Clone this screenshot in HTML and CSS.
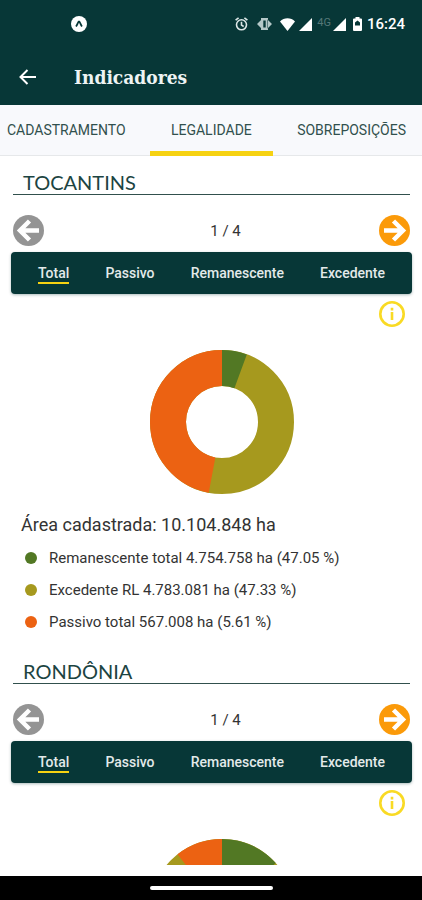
FILE: index.html
```html
<!DOCTYPE html>
<html lang="pt-BR">
<head>
<meta charset="utf-8">
<meta name="viewport" content="width=device-width, initial-scale=1">
<title>Indicadores</title>
<link rel="stylesheet" href="styles.css">
</head>
<body>
<svg class="symbols" aria-hidden="true">
  <symbol id="arrow-left" viewBox="0 0 31 31">
    <circle cx="15.500" cy="15.500" r="15.500" fill="currentColor"/>
    <path d="M16.500 6 7 15.500l9.500 9.500M8 15.500h18" fill="none" stroke="#fff" stroke-width="4.500"/>
  </symbol>
  <symbol id="arrow-right" viewBox="0 0 31 31">
    <circle cx="15.500" cy="15.500" r="15.500" fill="currentColor"/>
    <path d="m14.500 6 9.500 9.500-9.500 9.500M23 15.500H5" fill="none" stroke="#fff" stroke-width="4.500"/>
  </symbol>
  <symbol id="info" viewBox="0 0 26 26">
    <circle cx="13" cy="13" r="11.700" fill="none" stroke="currentColor" stroke-width="2.600"/>
    <path d="M13 11v8M13 6.800v2.600" stroke="currentColor" stroke-width="2.600"/>
  </symbol>
  <symbol id="signal" viewBox="0 0 13 13"><path d="M13 0v13H0z" fill="#fff"/></symbol>
</svg>
<div class="app">
  <header class="top">
    <div class="status">
      <svg class="notice" width="16" height="16" viewBox="0 0 16 16"><circle cx="8" cy="8" r="8" fill="#fff"/><path d="M5 10.500C6.300 9 7 5.500 8 5.500s1.700 3.500 3 5" fill="none" stroke="#073737" stroke-width="1.800"/></svg>
      <svg width="13" height="14" viewBox="0 0 13 14"><g fill="none" stroke="#dce6e6" stroke-width="1.600"><circle cx="6.500" cy="7.800" r="5"/><path d="M.6 3.200 3.600.8M12.400 3.200 9.400.8M6.500 4.800v3.300l2.200 1.400"/></g></svg>
      <svg class="vibrate" width="15" height="12" viewBox="0 0 15 12"><path d="M4 0h7v12H4zM0 6l4.500-4.500v9zM15 6l-4.500-4.500v9z" fill="#b4c8c8"/><path d="M7.500 2.500v7" stroke="#073737" stroke-width="2.400"/></svg>
      <svg class="wifi" width="15" height="13" viewBox="0 0 15 13"><path d="M0 3.500C4-.7 11-.7 15 3.500L7.500 13z" fill="#fff"/></svg>
      <svg class="bars" width="13" height="13"><use href="#signal"/></svg>
      <span class="network">4G</span>
      <svg width="13" height="13"><use href="#signal"/></svg>
      <svg class="battery" width="9" height="14" viewBox="0 0 9 14"><path d="M2.500 0h4v1.500H8q1 0 1 1V13q0 1-1 1H1q-1 0-1-1V2.500q0-1 1-1h1.500z" fill="#fff"/><path d="M2 8.500V5.500L4.500 3.500 7 5.500v3z" fill="#073737"/></svg>
      <span class="time">16:24</span>
    </div>
    <div class="bar">
      <button class="back" aria-label="Voltar"><svg width="17" height="16" viewBox="0 0 17 16"><path d="M8.500 1 1.500 8l7 7M2 8h15" fill="none" stroke="#fff" stroke-width="2"/></svg></button>
      <h1>Indicadores</h1>
    </div>
  </header>
  <nav class="tabs">
    <a href="#cadastramento">CADASTRAMENTO</a>
    <a href="#legalidade" class="current" aria-current="page">LEGALIDADE</a>
    <a href="#sobreposicoes">SOBREPOSIÇÕES</a>
  </nav>
  <main>
    <section>
      <h2>TOCANTINS</h2>
      <div class="pager">
        <button class="prev" aria-label="Anterior"><svg><use href="#arrow-left"/></svg></button>
        <span class="page">1 / 4</span>
        <button class="next" aria-label="Próximo"><svg><use href="#arrow-right"/></svg></button>
      </div>
      <div class="filters">
        <button class="selected">Total</button>
        <button>Passivo</button>
        <button>Remanescente</button>
        <button>Excedente</button>
      </div>
      <button class="info" aria-label="Informações"><svg><use href="#info"/></svg></button>
      <div class="chart">
        <svg class="donut" viewBox="0 0 144 144">
          <circle class="excess" cx="72" cy="72" r="54"/>
          <circle class="remaining" cx="72" cy="72" r="54" pathLength="100" stroke-dasharray="5.61 94.39"/>
          <circle class="liability" cx="72" cy="72" r="54" pathLength="100" stroke-dasharray="47.05 52.95" stroke-dashoffset="-52.95"/>
        </svg>
      </div>
      <p class="area">Área cadastrada: 10.104.848 ha</p>
      <ul class="legend">
        <li class="remaining">Remanescente total 4.754.758 ha (47.05 %)</li>
        <li class="excess">Excedente RL 4.783.081 ha (47.33 %)</li>
        <li class="liability">Passivo total 567.008 ha (5.61 %)</li>
      </ul>
    </section>
    <section>
      <h2>RONDÔNIA</h2>
      <div class="pager">
        <button class="prev" aria-label="Anterior"><svg><use href="#arrow-left"/></svg></button>
        <span class="page">1 / 4</span>
        <button class="next" aria-label="Próximo"><svg><use href="#arrow-right"/></svg></button>
      </div>
      <div class="filters">
        <button class="selected">Total</button>
        <button>Passivo</button>
        <button>Remanescente</button>
        <button>Excedente</button>
      </div>
      <button class="info" aria-label="Informações"><svg><use href="#info"/></svg></button>
      <div class="chart">
        <svg class="donut" viewBox="0 0 144 144">
          <circle class="excess" cx="72" cy="72" r="54"/>
          <circle class="remaining" cx="72" cy="72" r="54" pathLength="100" stroke-dasharray="13.4 86.6"/>
          <circle class="liability" cx="72" cy="72" r="54" pathLength="100" stroke-dasharray="10.6 89.4" stroke-dashoffset="-89.4"/>
        </svg>
      </div>
    </section>
  </main>
  <footer class="system"><span class="handle"></span></footer>
</div>
</body>
</html>
```
FILE: styles.css
```css
* { box-sizing: border-box; }
body {
  margin: 0;
  background: #fff;
  color: #333;
  font-family: Roboto, "Liberation Sans", sans-serif;
}
button {
  padding: 0;
  border: 0;
  background: none;
  color: inherit;
  font: inherit;
  cursor: pointer;
}
svg { display: block; flex: none; }
.symbols { position: absolute; width: 0; height: 0; }
.app { display: flex; flex-direction: column; height: 100vh; }

.top { flex: none; background: #073737; color: #fff; }
.status {
  display: flex;
  align-items: center;
  height: 48px;
  padding: 0 17px 0 71px;
}
.notice { margin-right: auto; }
.vibrate { margin-left: 9px; }
.wifi { margin-left: 8px; }
.bars { margin-left: 4px; }
.network { margin: 0 2px 2px 5px; color: #557777; font-size: 11px; line-height: 12px; }
.battery { margin: 0 5px 0 7px; }
.time { font-size: 15px; font-weight: 500; line-height: 20px; }
.bar { display: flex; align-items: center; height: 57px; padding-left: 19px; }
.back { margin-right: 38px; }
h1 {
  margin: 0;
  color: #eef4f4;
  font: bold 19px/28px "DejaVu Serif Condensed", "Liberation Serif", serif;
}

.tabs {
  display: flex;
  flex: none;
  justify-content: space-between;
  height: 51px;
  padding: 0 16px 0 7px;
  border-bottom: 1px solid #e6e8ea;
  background: #f8f9fc;
}
.tabs a {
  margin-bottom: -1px;
  color: #31504d;
  font-size: 14px;
  line-height: 51px;
  text-decoration: none;
}
.tabs .current { padding: 0 21px; border-bottom: 5px solid #f6d212; }

main { flex: 1; min-height: 0; margin-bottom: 11px; overflow: hidden; }
section { padding: 0 12px 7px 13px; }
h2 {
  margin: 0;
  padding: 14px 10px 0;
  border-bottom: 1px solid #31504d;
  color: #1c4442;
  font: 20px/24px Lato, sans-serif;
}
.pager {
  display: flex;
  align-items: center;
  padding: 20px 0 6px;
  font-size: 15px;
}
.pager svg { width: 31px; height: 31px; }
.page { flex: 1; padding-left: 28px; text-align: center; }
.prev { color: #949494; }
.next { color: #fb9a09; }
.filters {
  display: flex;
  align-items: center;
  justify-content: space-between;
  height: 42px;
  margin: 0 -2px;
  padding: 0 27px;
  border-radius: 4px;
  background: #073737;
  box-shadow: 0 1px 3px #07373755;
  color: #e3eaea;
  font-size: 14px;
  font-weight: 500;
}
.filters button { border: solid transparent; border-width: 2px 0; line-height: 18px; }
.filters .selected { border-bottom-color: #f6d212; }
.info { display: block; margin: 7px 5px 0 auto; color: #f9da24; }
.info svg { width: 26px; height: 26px; }
.chart { display: flex; justify-content: center; padding: 23px 0 0 20px; }
.donut { width: 144px; height: 144px; transform: rotate(-90deg); }
.donut circle { fill: none; stroke: currentColor; stroke-width: 36; }
.area { margin: 19px 8px 5px; font-size: 18px; line-height: 24px; }
.legend { margin: 0; padding: 0 12px; list-style: none; }
.legend li { display: flex; align-items: center; gap: 12px; font-size: 15px; line-height: 32px; }
.legend li::before { width: 12px; height: 12px; border-radius: 50%; background: currentColor; content: ""; }
.donut .remaining, .legend .remaining::before { color: #527824; }
.donut .excess, .legend .excess::before { color: #a6991e; }
.donut .liability, .legend .liability::before { color: #ec6212; }

.system {
  display: flex;
  flex: none;
  align-items: center;
  justify-content: center;
  height: 24px;
  background: #000;
}
.handle { width: 123px; height: 4px; border-radius: 2px; background: #fff; }
```
